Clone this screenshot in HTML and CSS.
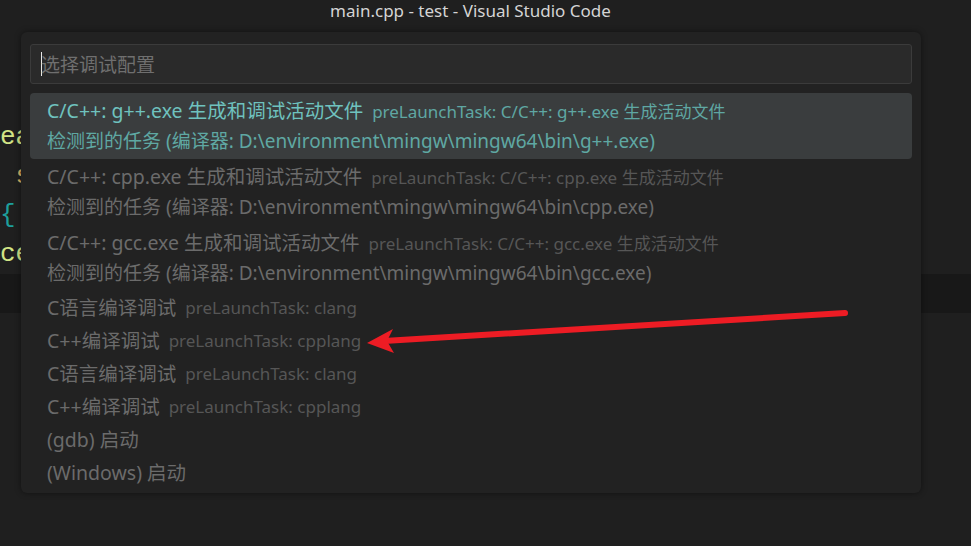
FILE: index.html
```html
<!DOCTYPE html>
<html lang="zh-CN">
<head>
<meta charset="utf-8">
<title>main.cpp - test - Visual Studio Code</title>
<link rel="stylesheet" href="styles.css">
</head>
<body>
<div class="titlebar">main.cpp - test - Visual Studio Code</div>
<div class="editor">
  <div class="code">
    <div class="ln fn">ea</div>
    <div class="ln kw"> s</div>
    <div class="ln br">{</div>
    <div class="ln fn">ce</div>
  </div>
  <div class="band"></div>
</div>

<div class="quickpick">
  <div class="input"><span class="caret"></span><span class="ph">选择调试配置</span></div>
  <div class="list">
    <div class="item two active">
      <div class="l1"><span class="label">C/C++: g++.exe 生成和调试活动文件</span><span class="desc">preLaunchTask: C/C++: g++.exe 生成活动文件</span></div>
      <div class="l2"><span>检测到的任务 (编译器: D:\environment\mingw\mingw64\bin\g++.exe)</span></div>
    </div>
    <div class="item two">
      <div class="l1"><span class="label">C/C++: cpp.exe 生成和调试活动文件</span><span class="desc">preLaunchTask: C/C++: cpp.exe 生成活动文件</span></div>
      <div class="l2"><span>检测到的任务 (编译器: D:\environment\mingw\mingw64\bin\cpp.exe)</span></div>
    </div>
    <div class="item two">
      <div class="l1"><span class="label">C/C++: gcc.exe 生成和调试活动文件</span><span class="desc">preLaunchTask: C/C++: gcc.exe 生成活动文件</span></div>
      <div class="l2"><span>检测到的任务 (编译器: D:\environment\mingw\mingw64\bin\gcc.exe)</span></div>
    </div>
    <div class="item one"><span class="label">C语言编译调试</span><span class="desc">preLaunchTask: clang</span></div>
    <div class="item one"><span class="label">C++编译调试</span><span class="desc">preLaunchTask: cpplang</span></div>
    <div class="item one"><span class="label">C语言编译调试</span><span class="desc">preLaunchTask: clang</span></div>
    <div class="item one"><span class="label">C++编译调试</span><span class="desc">preLaunchTask: cpplang</span></div>
    <div class="item one"><span class="label">(gdb) 启动</span></div>
    <div class="item one"><span class="label">(Windows) 启动</span></div>
  </div>
</div>

<svg class="arrow" width="971" height="546" viewBox="0 0 971 546">
  <line x1="845" y1="313" x2="384" y2="341" stroke="#ed1c24" stroke-width="6" stroke-linecap="round"/>
  <polygon points="367,343 393,329 387,341 394,353" fill="#ed1c24"/>
</svg>
</body>
</html>
```
FILE: styles.css
```css
html, body {
  margin: 0;
  padding: 0;
}
body {
  width: 971px;
  height: 546px;
  overflow: hidden;
  background: #1f1f1f;
  font-family: "Noto Sans", "Noto Sans CJK SC", sans-serif;
  position: relative;
}
.titlebar {
  height: 30px;
  line-height: 22px;
  padding-right: 30px;
  text-align: center;
  color: #d4d4d4;
  font-size: 17px;
  background: #1f1f1f;
}
.editor {
  background: #1f1f1f;
  height: 516px;
}
.code {
  padding-top: 88px;
  font-family: "Liberation Mono", monospace;
  font-size: 26px;
}
.ln {
  height: 39px;
  line-height: 39px;
  white-space: pre;
}
.fn { color: #d2e486; }
.kw { color: #dbb464; }
.br { color: #1d9f9c; }
.band {
  height: 39px;
  background: #181818;
}
.quickpick {
  position: absolute;
  left: 21px;
  top: 32px;
  width: 882px;
  padding: 12px 9px 4px;
  background: #222222;
  border-radius: 6px;
  box-shadow: 0 0 6px rgba(0, 0, 0, 0.45);
}
.input {
  height: 38px;
  border: 1px solid #3b3b3b;
  border-radius: 3px;
  background: #2a2a2a;
  display: flex;
  align-items: center;
  padding-left: 10px;
  font-size: 19px;
}
.caret {
  width: 1px;
  height: 24px;
  background: #e8e8e8;
  margin-right: -1px;
}
.ph {
  color: #6f6f6f;
}
.list {
  margin-top: 9px;
}
.item {
  padding-left: 17px;
  border-radius: 4px;
  white-space: nowrap;
  color: #6b6b6b;
  font-size: 19px;
}
.item.two {
  padding-top: 3px;
  padding-bottom: 3px;
}
.item.two .l1, .item.two .l2 {
  height: 30px;
  display: flex;
  align-items: center;
}
.item.one {
  height: 33px;
  display: flex;
  align-items: center;
}
.label {
  font-size: 19.5px;
  line-height: 26px;
  margin-right: 9px;
}
.l2 span {
  line-height: 26px;
}
.desc {
  font-size: 17px;
  line-height: 24px;
  color: #565656;
  padding-top: 1px;
}
.item.active {
  background: #3a3d3e;
  color: #6fc2be;
}
.item.active .desc {
  color: #5fa7a3;
}
.item.active .l2 {
  color: #5fa8a3;
}
.arrow {
  position: absolute;
  left: 0;
  top: 0;
  pointer-events: none;
}
```
